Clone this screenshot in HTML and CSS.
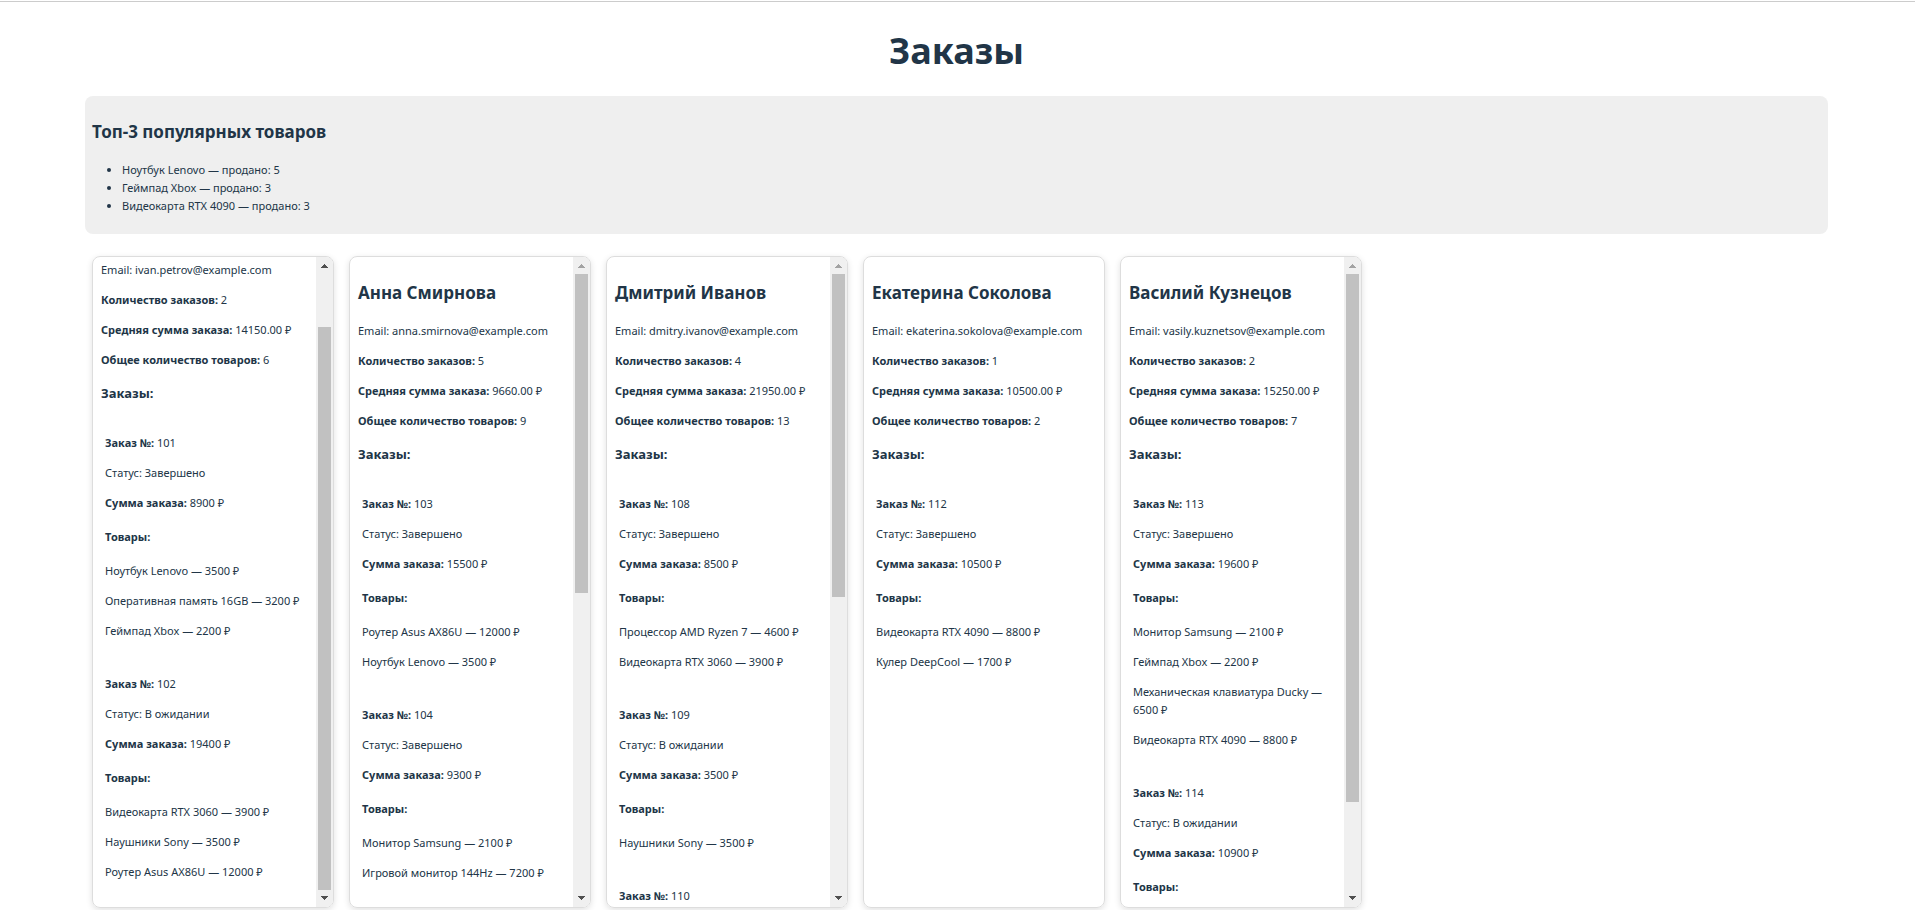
FILE: index.html
```html
<!DOCTYPE html>
<html lang="ru">
<head>
<meta charset="utf-8">
<title>Заказы</title>
<link rel="stylesheet" href="styles.css">
</head>
<body>
<main class="page">
  <h1 class="page-title">Заказы</h1>

  <section class="top-products">
    <h2>Топ-3 популярных товаров</h2>
    <ul>
      <li>Ноутбук Lenovo — продано: 5</li>
      <li>Геймпад Xbox — продано: 3</li>
      <li>Видеокарта RTX 4090 — продано: 3</li>
    </ul>
  </section>

  <div class="clients">
    <article class="client">
      <div class="client-body" data-scroll="end">
        <h2>Иван Петров</h2>
        <p>Email: ivan.petrov@example.com</p>
        <p><strong>Количество заказов:</strong> 2</p>
        <p><strong>Средняя сумма заказа:</strong> 14150.00 ₽</p>
        <p><strong>Общее количество товаров:</strong> 6</p>
        <h3>Заказы:</h3>
        <section class="order">
          <p><strong>Заказ №:</strong> 101</p>
          <p>Статус: Завершено</p>
          <p><strong>Сумма заказа:</strong> 8900 ₽</p>
          <h4>Товары:</h4>
          <p>Ноутбук Lenovo — 3500 ₽</p>
          <p>Оперативная память 16GB — 3200 ₽</p>
          <p>Геймпад Xbox — 2200 ₽</p>
        </section>
        <section class="order">
          <p><strong>Заказ №:</strong> 102</p>
          <p>Статус: В ожидании</p>
          <p><strong>Сумма заказа:</strong> 19400 ₽</p>
          <h4>Товары:</h4>
          <p>Видеокарта RTX 3060 — 3900 ₽</p>
          <p>Наушники Sony — 3500 ₽</p>
          <p>Роутер Asus AX86U — 12000 ₽</p>
        </section>
      </div>
    </article>

    <article class="client">
      <div class="client-body">
        <h2>Анна Смирнова</h2>
        <p>Email: anna.smirnova@example.com</p>
        <p><strong>Количество заказов:</strong> 5</p>
        <p><strong>Средняя сумма заказа:</strong> 9660.00 ₽</p>
        <p><strong>Общее количество товаров:</strong> 9</p>
        <h3>Заказы:</h3>
        <section class="order">
          <p><strong>Заказ №:</strong> 103</p>
          <p>Статус: Завершено</p>
          <p><strong>Сумма заказа:</strong> 15500 ₽</p>
          <h4>Товары:</h4>
          <p>Роутер Asus AX86U — 12000 ₽</p>
          <p>Ноутбук Lenovo — 3500 ₽</p>
        </section>
        <section class="order">
          <p><strong>Заказ №:</strong> 104</p>
          <p>Статус: Завершено</p>
          <p><strong>Сумма заказа:</strong> 9300 ₽</p>
          <h4>Товары:</h4>
          <p>Монитор Samsung — 2100 ₽</p>
          <p>Игровой монитор 144Hz — 7200 ₽</p>
        </section>
        <section class="order">
          <p><strong>Заказ №:</strong> 105</p>
          <p>Статус: Завершено</p>
          <p><strong>Сумма заказа:</strong> 5700 ₽</p>
          <h4>Товары:</h4>
          <p>Геймпад Xbox — 2200 ₽</p>
          <p>Ноутбук Lenovo — 3500 ₽</p>
        </section>
        <section class="order">
          <p><strong>Заказ №:</strong> 106</p>
          <p>Статус: В ожидании</p>
          <p><strong>Сумма заказа:</strong> 12000 ₽</p>
          <h4>Товары:</h4>
          <p>Роутер Asus AX86U — 12000 ₽</p>
        </section>
        <section class="order">
          <p><strong>Заказ №:</strong> 107</p>
          <p>Статус: Завершено</p>
          <p><strong>Сумма заказа:</strong> 5800 ₽</p>
          <h4>Товары:</h4>
          <p>Монитор Samsung — 2100 ₽</p>
          <p>Клавиатура Keychron — 3700 ₽</p>
        </section>
      </div>
    </article>

    <article class="client">
      <div class="client-body">
        <h2>Дмитрий Иванов</h2>
        <p>Email: dmitry.ivanov@example.com</p>
        <p><strong>Количество заказов:</strong> 4</p>
        <p><strong>Средняя сумма заказа:</strong> 21950.00 ₽</p>
        <p><strong>Общее количество товаров:</strong> 13</p>
        <h3>Заказы:</h3>
        <section class="order">
          <p><strong>Заказ №:</strong> 108</p>
          <p>Статус: Завершено</p>
          <p><strong>Сумма заказа:</strong> 8500 ₽</p>
          <h4>Товары:</h4>
          <p>Процессор AMD Ryzen 7 — 4600 ₽</p>
          <p>Видеокарта RTX 3060 — 3900 ₽</p>
        </section>
        <section class="order">
          <p><strong>Заказ №:</strong> 109</p>
          <p>Статус: В ожидании</p>
          <p><strong>Сумма заказа:</strong> 3500 ₽</p>
          <h4>Товары:</h4>
          <p>Наушники Sony — 3500 ₽</p>
        </section>
        <section class="order">
          <p><strong>Заказ №:</strong> 110</p>
          <p>Статус: Завершено</p>
          <p><strong>Сумма заказа:</strong> 37500 ₽</p>
          <h4>Товары:</h4>
          <p>Видеокарта RTX 4090 — 8800 ₽</p>
          <p>Механическая клавиатура Ducky — 6500 ₽</p>
          <p>Роутер Asus AX86U — 12000 ₽</p>
          <p>Игровой монитор 144Hz — 7200 ₽</p>
          <p>Сервер NAS — 3000 ₽</p>
        </section>
        <section class="order">
          <p><strong>Заказ №:</strong> 111</p>
          <p>Статус: Завершено</p>
          <p><strong>Сумма заказа:</strong> 38300 ₽</p>
          <h4>Товары:</h4>
          <p>Роутер Asus AX86U — 12000 ₽</p>
          <p>Роутер Asus AX86U — 12000 ₽</p>
          <p>Игровой монитор 144Hz — 7200 ₽</p>
          <p>Наушники Sony — 3500 ₽</p>
          <p>Корпус NZXT — 3600 ₽</p>
        </section>
      </div>
    </article>

    <article class="client">
      <div class="client-body">
        <h2>Екатерина Соколова</h2>
        <p>Email: ekaterina.sokolova@example.com</p>
        <p><strong>Количество заказов:</strong> 1</p>
        <p><strong>Средняя сумма заказа:</strong> 10500.00 ₽</p>
        <p><strong>Общее количество товаров:</strong> 2</p>
        <h3>Заказы:</h3>
        <section class="order">
          <p><strong>Заказ №:</strong> 112</p>
          <p>Статус: Завершено</p>
          <p><strong>Сумма заказа:</strong> 10500 ₽</p>
          <h4>Товары:</h4>
          <p>Видеокарта RTX 4090 — 8800 ₽</p>
          <p>Кулер DeepCool — 1700 ₽</p>
        </section>
      </div>
    </article>

    <article class="client">
      <div class="client-body">
        <h2>Василий Кузнецов</h2>
        <p>Email: vasily.kuznetsov@example.com</p>
        <p><strong>Количество заказов:</strong> 2</p>
        <p><strong>Средняя сумма заказа:</strong> 15250.00 ₽</p>
        <p><strong>Общее количество товаров:</strong> 7</p>
        <h3>Заказы:</h3>
        <section class="order">
          <p><strong>Заказ №:</strong> 113</p>
          <p>Статус: Завершено</p>
          <p><strong>Сумма заказа:</strong> 19600 ₽</p>
          <h4>Товары:</h4>
          <p>Монитор Samsung — 2100 ₽</p>
          <p>Геймпад Xbox — 2200 ₽</p>
          <p>Механическая клавиатура Ducky — 6500 ₽</p>
          <p>Видеокарта RTX 4090 — 8800 ₽</p>
        </section>
        <section class="order">
          <p><strong>Заказ №:</strong> 114</p>
          <p>Статус: В ожидании</p>
          <p><strong>Сумма заказа:</strong> 10900 ₽</p>
          <h4>Товары:</h4>
          <p>Ноутбук Lenovo — 3500 ₽</p>
          <p>Наушники Sony — 3500 ₽</p>
          <p>Видеокарта RTX 3060 — 3900 ₽</p>
        </section>
      </div>
    </article>
  </div>
</main>

<template id="scrollbar">
  <div class="scrollbar">
    <button class="scroll-button scroll-up" type="button" aria-label="Прокрутить вверх">
      <svg viewBox="0 0 17 17" aria-hidden="true"><path d="M5 11V10H6V9H7V8H8V7H9V8H10V9H11V10H12V11Z"/></svg>
    </button>
    <div class="scroll-track"><div class="scroll-thumb"></div></div>
    <button class="scroll-button scroll-down" type="button" aria-label="Прокрутить вниз">
      <svg viewBox="0 0 17 17" aria-hidden="true"><path d="M5 6V7H6V8H7V9H8V10H9V9H10V8H11V7H12V6Z"/></svg>
    </button>
  </div>
</template>
<script src="script.js"></script>
</body>
</html>
```
FILE: styles.css
```css
* {
  box-sizing: border-box;
}

body {
  margin: 0;
  border-top: 1px solid #fff;
  background: #fff;
  color: #213547;
  font: 11px/18px "Segoe UI", "Noto Sans", "Open Sans", sans-serif;
}

.page {
  padding: 22px 87px 2px 85px;
  border-top: 1px solid #ccc;
}

.page-title {
  margin: 0 0 18px;
  font-size: 36px;
  line-height: 54px;
  text-align: center;
}

h2 {
  margin: 15px 0 16px;
  font-size: 17px;
  line-height: 27px;
}

h3 {
  margin: 14px 0;
  font-size: 13px;
  line-height: 21px;
}

h4 {
  margin: 16px 0;
  font-size: 11px;
}

p {
  margin: 12px 0;
}

.top-products {
  display: flow-root;
  margin-bottom: 22px;
  padding: 7px;
  border-radius: 8px;
  background: #efefef;
}

.top-products ul {
  margin: 12px 0;
  padding-left: 30px;
}

.clients {
  display: flex;
  flex-wrap: wrap;
  gap: 15px;
  padding: 0 7px;
}

.client {
  display: flex;
  width: 242px;
  height: calc(100vh - 258px);
  overflow: hidden;
  border: 1px solid #ddd;
  border-radius: 8px;
  box-shadow: 0 2px 6px rgba(0, 0, 0, 0.12);
}

.client-body {
  flex: 1;
  min-width: 0;
  padding: 7px 8px;
  overflow-y: auto;
  scrollbar-width: none;
}

.order {
  display: flow-root;
  margin-bottom: 3px;
  padding: 4px;
}

.scrollbar {
  display: flex;
  flex: none;
  flex-direction: column;
  width: 17px;
  background: #f0f0f0;
}

.scroll-button {
  display: block;
  width: 17px;
  height: 17px;
  padding: 0;
  border: 0;
  background: none;
  color: #505050;
}

.scroll-button:disabled {
  color: #a3a3a3;
}

.scroll-button svg {
  display: block;
  fill: currentColor;
}

.scroll-track {
  display: flex;
  flex: 1;
  flex-direction: column;
  padding: 0 2px;
}

.scroll-thumb {
  background: #c1c1c1;
}
```
FILE: script.js
```js
// Adds a scrollbar to every card whose content is taller than the card.
document.querySelectorAll('.client-body').forEach(function (body) {
  if (body.scrollHeight <= body.clientHeight) {
    return;
  }

  var bar = document.getElementById('scrollbar').content.firstElementChild.cloneNode(true);
  var up = bar.querySelector('.scroll-up');
  var down = bar.querySelector('.scroll-down');
  var track = bar.querySelector('.scroll-track');
  var thumb = bar.querySelector('.scroll-thumb');
  body.after(bar);

  function update() {
    var scale = track.clientHeight / body.scrollHeight;
    thumb.style.height = Math.round(body.clientHeight * scale) + 'px';
    thumb.style.marginTop = Math.round(body.scrollTop * scale) + 'px';
    up.disabled = body.scrollTop <= 0;
  }

  up.addEventListener('click', function () { body.scrollTop -= 40; });
  down.addEventListener('click', function () { body.scrollTop += 40; });
  body.addEventListener('scroll', update);
  window.addEventListener('resize', update);

  if (body.dataset.scroll === 'end') {
    body.scrollTop = body.scrollHeight;
  }
  update();
});
```
